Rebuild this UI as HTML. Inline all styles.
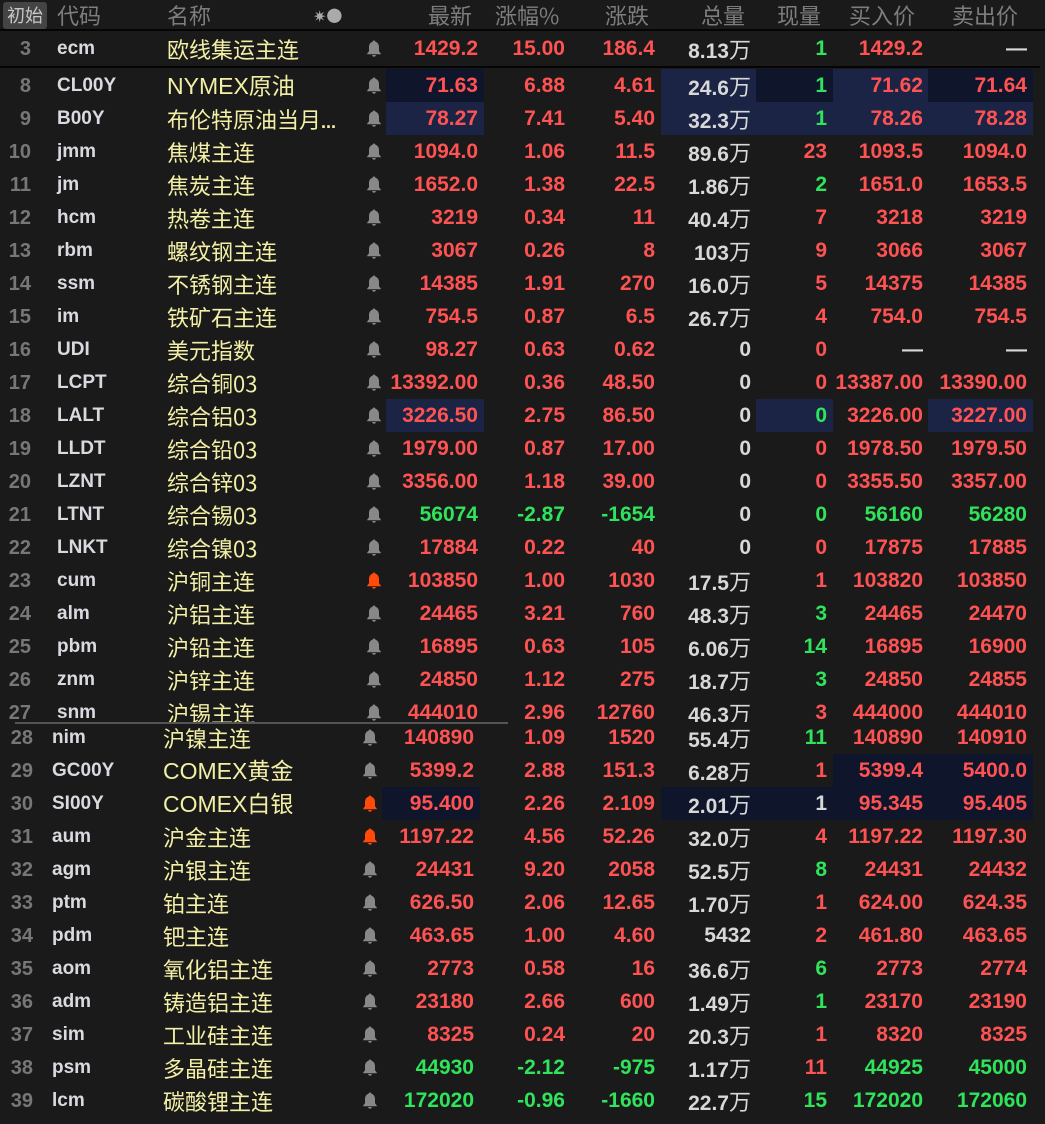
<!DOCTYPE html>
<html><head><meta charset="utf-8">
<style>
*{margin:0;padding:0;box-sizing:border-box}
body{width:1045px;height:1124px;background:#1a1a1a;overflow:hidden;position:relative;font-family:"Liberation Sans","Noto Sans CJK SC",sans-serif}
.hd{position:absolute;top:0;left:0;width:1045px;height:31px;background:#1a1a1a;border-bottom:2px solid #050505;color:#7d7d7d;font-size:22px;font-family:"Noto Sans CJK SC",sans-serif;line-height:30px}
.hd span{position:absolute;top:0}
.init{position:absolute;left:3px;top:2px;width:44px;height:27px;background:#444;border-radius:3px;color:#c8c8c8;font-size:18px;line-height:27px;text-align:center}
.r{position:absolute;left:0;width:1045px;height:33px;line-height:34px;font-weight:bold;font-size:21px}
.r>span{position:absolute;top:0;height:33px;white-space:nowrap}
.n{left:0;width:31px;text-align:right;color:#777;font-size:20px}
.c{left:57px;color:#d9d9e0;font-size:19px}
.m{left:167px;color:#f3f0a6;font-weight:normal;font-size:22px;font-family:"Noto Sans CJK SC",sans-serif}
.m.lat{font-family:"Liberation Sans","Noto Sans CJK SC",sans-serif;font-size:23px}
.b{left:367px;width:14px}
.b svg{position:absolute;top:8px;left:0}
.p1{left:386px;width:98px;text-align:right;padding-right:6px}
.p2{left:484px;width:87px;text-align:right;padding-right:6px}
.p3{left:571px;width:90px;text-align:right;padding-right:6px}
.v{left:661px;width:95px;text-align:right;padding-right:5px;color:#d8d8d8}
.v i{font-style:normal;font-weight:normal;font-size:22px;font-family:"Noto Sans CJK SC",sans-serif}
.x{left:756px;width:77px;text-align:right;padding-right:6px}
.bd{left:833px;width:95px;text-align:right;padding-right:5px}
.as{left:928px;width:105px;text-align:right;padding-right:6px}
.B .n{left:0;width:33px}.B .c{left:52px}.B .m{left:163px}.B .b{left:363px}
.B .p1{left:382px}
.R{color:#ff5252}.G{color:#2fe35a}.W{color:#d8d8d8}
.h1{background:#1b2444}.h2{background:#0f152b}
.wrapA{position:absolute;left:0;top:68px;width:1045px;height:654px;overflow:hidden}
.wrapB{position:absolute;left:0;top:722px;width:1045px;height:402px;overflow:hidden}
.sep{position:absolute;top:66px;left:0;width:1040px;height:2px;background:#050505}
.div{position:absolute;top:722px;left:15px;width:493px;height:2px;background:#555}
</style></head><body>
<svg width="0" height="0" style="position:absolute"><defs><symbol id="bell" viewBox="0 0 14 17"><path d="M7 0.5c0.9 0 1.4 0.6 1.4 1.3C10.7 2.4 12 4.4 12 7v4.2l1.8 2.3v0.8H0.2v-0.8L2 11.2V7c0-2.6 1.3-4.6 3.6-5.2C5.6 1.1 6.1 0.5 7 0.5zM5.2 15h3.6c0 1-0.8 1.8-1.8 1.8S5.2 16 5.2 15z"/></symbol></defs></svg>
<div class="hd">
<div class="init">初始</div>
<span style="left:57px">代码</span>
<span style="left:167px">名称</span>
<span style="left:313px;font-size:16px;color:#aaa">✷●</span>
<span style="left:428px">最新</span>
<span style="left:495px">涨幅%</span>
<span style="left:605px">涨跌</span>
<span style="left:701px">总量</span>
<span style="left:777px">现量</span>
<span style="left:849px">买入价</span>
<span style="left:952px">卖出价</span>
</div>
<div class="r" style="top:32px"><span class="n">3</span><span class="c">ecm</span><span class="m">欧线集运主连</span><span class="b" style="fill:#888"><svg width="14" height="17"><use href="#bell"/></svg></span><span class="p1 R">1429.2</span><span class="p2 R">15.00</span><span class="p3 R">186.4</span><span class="v">8.13<i>万</i></span><span class="x G">1</span><span class="bd R">1429.2</span><span class="as W">—</span></div>
<div class="sep"></div>
<div class="wrapA">
<div class="r" style="top:1px"><span class="n">8</span><span class="c">CL00Y</span><span class="m lat">NYMEX原油</span><span class="b" style="fill:#888"><svg width="14" height="17"><use href="#bell"/></svg></span><span class="p1 R h2">71.63</span><span class="p2 R">6.88</span><span class="p3 R">4.61</span><span class="v h1">24.6<i>万</i></span><span class="x G h2">1</span><span class="bd R h1">71.62</span><span class="as R h2">71.64</span></div>
<div class="r" style="top:34px"><span class="n">9</span><span class="c">B00Y</span><span class="m">布伦特原油当月<span style="font-family:'Liberation Sans';font-weight:bold;font-size:18px">...</span></span><span class="b" style="fill:#888"><svg width="14" height="17"><use href="#bell"/></svg></span><span class="p1 R h1">78.27</span><span class="p2 R">7.41</span><span class="p3 R">5.40</span><span class="v h1">32.3<i>万</i></span><span class="x G h1">1</span><span class="bd R h1">78.26</span><span class="as R h1">78.28</span></div>
<div class="r" style="top:67px"><span class="n">10</span><span class="c">jmm</span><span class="m">焦煤主连</span><span class="b" style="fill:#888"><svg width="14" height="17"><use href="#bell"/></svg></span><span class="p1 R">1094.0</span><span class="p2 R">1.06</span><span class="p3 R">11.5</span><span class="v">89.6<i>万</i></span><span class="x R">23</span><span class="bd R">1093.5</span><span class="as R">1094.0</span></div>
<div class="r" style="top:100px"><span class="n">11</span><span class="c">jm</span><span class="m">焦炭主连</span><span class="b" style="fill:#888"><svg width="14" height="17"><use href="#bell"/></svg></span><span class="p1 R">1652.0</span><span class="p2 R">1.38</span><span class="p3 R">22.5</span><span class="v">1.86<i>万</i></span><span class="x G">2</span><span class="bd R">1651.0</span><span class="as R">1653.5</span></div>
<div class="r" style="top:133px"><span class="n">12</span><span class="c">hcm</span><span class="m">热卷主连</span><span class="b" style="fill:#888"><svg width="14" height="17"><use href="#bell"/></svg></span><span class="p1 R">3219</span><span class="p2 R">0.34</span><span class="p3 R">11</span><span class="v">40.4<i>万</i></span><span class="x R">7</span><span class="bd R">3218</span><span class="as R">3219</span></div>
<div class="r" style="top:166px"><span class="n">13</span><span class="c">rbm</span><span class="m">螺纹钢主连</span><span class="b" style="fill:#888"><svg width="14" height="17"><use href="#bell"/></svg></span><span class="p1 R">3067</span><span class="p2 R">0.26</span><span class="p3 R">8</span><span class="v">103<i>万</i></span><span class="x R">9</span><span class="bd R">3066</span><span class="as R">3067</span></div>
<div class="r" style="top:199px"><span class="n">14</span><span class="c">ssm</span><span class="m">不锈钢主连</span><span class="b" style="fill:#888"><svg width="14" height="17"><use href="#bell"/></svg></span><span class="p1 R">14385</span><span class="p2 R">1.91</span><span class="p3 R">270</span><span class="v">16.0<i>万</i></span><span class="x R">5</span><span class="bd R">14375</span><span class="as R">14385</span></div>
<div class="r" style="top:232px"><span class="n">15</span><span class="c">im</span><span class="m">铁矿石主连</span><span class="b" style="fill:#888"><svg width="14" height="17"><use href="#bell"/></svg></span><span class="p1 R">754.5</span><span class="p2 R">0.87</span><span class="p3 R">6.5</span><span class="v">26.7<i>万</i></span><span class="x R">4</span><span class="bd R">754.0</span><span class="as R">754.5</span></div>
<div class="r" style="top:265px"><span class="n">16</span><span class="c">UDI</span><span class="m">美元指数</span><span class="b" style="fill:#888"><svg width="14" height="17"><use href="#bell"/></svg></span><span class="p1 R">98.27</span><span class="p2 R">0.63</span><span class="p3 R">0.62</span><span class="v">0</span><span class="x R">0</span><span class="bd W">—</span><span class="as W">—</span></div>
<div class="r" style="top:298px"><span class="n">17</span><span class="c">LCPT</span><span class="m">综合铜03</span><span class="b" style="fill:#888"><svg width="14" height="17"><use href="#bell"/></svg></span><span class="p1 R">13392.00</span><span class="p2 R">0.36</span><span class="p3 R">48.50</span><span class="v">0</span><span class="x R">0</span><span class="bd R">13387.00</span><span class="as R">13390.00</span></div>
<div class="r" style="top:331px"><span class="n">18</span><span class="c">LALT</span><span class="m">综合铝03</span><span class="b" style="fill:#888"><svg width="14" height="17"><use href="#bell"/></svg></span><span class="p1 R h1">3226.50</span><span class="p2 R">2.75</span><span class="p3 R">86.50</span><span class="v">0</span><span class="x G h1">0</span><span class="bd R">3226.00</span><span class="as R h1">3227.00</span></div>
<div class="r" style="top:364px"><span class="n">19</span><span class="c">LLDT</span><span class="m">综合铅03</span><span class="b" style="fill:#888"><svg width="14" height="17"><use href="#bell"/></svg></span><span class="p1 R">1979.00</span><span class="p2 R">0.87</span><span class="p3 R">17.00</span><span class="v">0</span><span class="x R">0</span><span class="bd R">1978.50</span><span class="as R">1979.50</span></div>
<div class="r" style="top:397px"><span class="n">20</span><span class="c">LZNT</span><span class="m">综合锌03</span><span class="b" style="fill:#888"><svg width="14" height="17"><use href="#bell"/></svg></span><span class="p1 R">3356.00</span><span class="p2 R">1.18</span><span class="p3 R">39.00</span><span class="v">0</span><span class="x R">0</span><span class="bd R">3355.50</span><span class="as R">3357.00</span></div>
<div class="r" style="top:430px"><span class="n">21</span><span class="c">LTNT</span><span class="m">综合锡03</span><span class="b" style="fill:#888"><svg width="14" height="17"><use href="#bell"/></svg></span><span class="p1 G">56074</span><span class="p2 G">-2.87</span><span class="p3 G">-1654</span><span class="v">0</span><span class="x G">0</span><span class="bd G">56160</span><span class="as G">56280</span></div>
<div class="r" style="top:463px"><span class="n">22</span><span class="c">LNKT</span><span class="m">综合镍03</span><span class="b" style="fill:#888"><svg width="14" height="17"><use href="#bell"/></svg></span><span class="p1 R">17884</span><span class="p2 R">0.22</span><span class="p3 R">40</span><span class="v">0</span><span class="x R">0</span><span class="bd R">17875</span><span class="as R">17885</span></div>
<div class="r" style="top:496px"><span class="n">23</span><span class="c">cum</span><span class="m">沪铜主连</span><span class="b" style="fill:#ff4a0a"><svg width="14" height="17"><use href="#bell"/></svg></span><span class="p1 R">103850</span><span class="p2 R">1.00</span><span class="p3 R">1030</span><span class="v">17.5<i>万</i></span><span class="x R">1</span><span class="bd R">103820</span><span class="as R">103850</span></div>
<div class="r" style="top:529px"><span class="n">24</span><span class="c">alm</span><span class="m">沪铝主连</span><span class="b" style="fill:#888"><svg width="14" height="17"><use href="#bell"/></svg></span><span class="p1 R">24465</span><span class="p2 R">3.21</span><span class="p3 R">760</span><span class="v">48.3<i>万</i></span><span class="x G">3</span><span class="bd R">24465</span><span class="as R">24470</span></div>
<div class="r" style="top:562px"><span class="n">25</span><span class="c">pbm</span><span class="m">沪铅主连</span><span class="b" style="fill:#888"><svg width="14" height="17"><use href="#bell"/></svg></span><span class="p1 R">16895</span><span class="p2 R">0.63</span><span class="p3 R">105</span><span class="v">6.06<i>万</i></span><span class="x G">14</span><span class="bd R">16895</span><span class="as R">16900</span></div>
<div class="r" style="top:595px"><span class="n">26</span><span class="c">znm</span><span class="m">沪锌主连</span><span class="b" style="fill:#888"><svg width="14" height="17"><use href="#bell"/></svg></span><span class="p1 R">24850</span><span class="p2 R">1.12</span><span class="p3 R">275</span><span class="v">18.7<i>万</i></span><span class="x G">3</span><span class="bd R">24850</span><span class="as R">24855</span></div>
<div class="r" style="top:628px"><span class="n">27</span><span class="c">snm</span><span class="m">沪锡主连</span><span class="b" style="fill:#888"><svg width="14" height="17"><use href="#bell"/></svg></span><span class="p1 R">444010</span><span class="p2 R">2.96</span><span class="p3 R">12760</span><span class="v">46.3<i>万</i></span><span class="x R">3</span><span class="bd R">444000</span><span class="as R">444010</span></div>
</div>
<div class="wrapB">
<div class="r B" style="top:-1px"><span class="n">28</span><span class="c">nim</span><span class="m">沪镍主连</span><span class="b" style="fill:#888"><svg width="14" height="17"><use href="#bell"/></svg></span><span class="p1 R">140890</span><span class="p2 R">1.09</span><span class="p3 R">1520</span><span class="v">55.4<i>万</i></span><span class="x G">11</span><span class="bd R">140890</span><span class="as R">140910</span></div>
<div class="r B" style="top:32px"><span class="n">29</span><span class="c">GC00Y</span><span class="m lat">COMEX黄金</span><span class="b" style="fill:#888"><svg width="14" height="17"><use href="#bell"/></svg></span><span class="p1 R">5399.2</span><span class="p2 R">2.88</span><span class="p3 R">151.3</span><span class="v">6.28<i>万</i></span><span class="x R">1</span><span class="bd R h2">5399.4</span><span class="as R h2">5400.0</span></div>
<div class="r B" style="top:65px"><span class="n">30</span><span class="c">SI00Y</span><span class="m lat">COMEX白银</span><span class="b" style="fill:#ff4a0a"><svg width="14" height="17"><use href="#bell"/></svg></span><span class="p1 R h2">95.400</span><span class="p2 R">2.26</span><span class="p3 R">2.109</span><span class="v h2">2.01<i>万</i></span><span class="x W h2">1</span><span class="bd R h2">95.345</span><span class="as R h2">95.405</span></div>
<div class="r B" style="top:98px"><span class="n">31</span><span class="c">aum</span><span class="m">沪金主连</span><span class="b" style="fill:#ff4a0a"><svg width="14" height="17"><use href="#bell"/></svg></span><span class="p1 R">1197.22</span><span class="p2 R">4.56</span><span class="p3 R">52.26</span><span class="v">32.0<i>万</i></span><span class="x R">4</span><span class="bd R">1197.22</span><span class="as R">1197.30</span></div>
<div class="r B" style="top:131px"><span class="n">32</span><span class="c">agm</span><span class="m">沪银主连</span><span class="b" style="fill:#888"><svg width="14" height="17"><use href="#bell"/></svg></span><span class="p1 R">24431</span><span class="p2 R">9.20</span><span class="p3 R">2058</span><span class="v">52.5<i>万</i></span><span class="x G">8</span><span class="bd R">24431</span><span class="as R">24432</span></div>
<div class="r B" style="top:164px"><span class="n">33</span><span class="c">ptm</span><span class="m">铂主连</span><span class="b" style="fill:#888"><svg width="14" height="17"><use href="#bell"/></svg></span><span class="p1 R">626.50</span><span class="p2 R">2.06</span><span class="p3 R">12.65</span><span class="v">1.70<i>万</i></span><span class="x R">1</span><span class="bd R">624.00</span><span class="as R">624.35</span></div>
<div class="r B" style="top:197px"><span class="n">34</span><span class="c">pdm</span><span class="m">钯主连</span><span class="b" style="fill:#888"><svg width="14" height="17"><use href="#bell"/></svg></span><span class="p1 R">463.65</span><span class="p2 R">1.00</span><span class="p3 R">4.60</span><span class="v">5432</span><span class="x R">2</span><span class="bd R">461.80</span><span class="as R">463.65</span></div>
<div class="r B" style="top:230px"><span class="n">35</span><span class="c">aom</span><span class="m">氧化铝主连</span><span class="b" style="fill:#888"><svg width="14" height="17"><use href="#bell"/></svg></span><span class="p1 R">2773</span><span class="p2 R">0.58</span><span class="p3 R">16</span><span class="v">36.6<i>万</i></span><span class="x G">6</span><span class="bd R">2773</span><span class="as R">2774</span></div>
<div class="r B" style="top:263px"><span class="n">36</span><span class="c">adm</span><span class="m">铸造铝主连</span><span class="b" style="fill:#888"><svg width="14" height="17"><use href="#bell"/></svg></span><span class="p1 R">23180</span><span class="p2 R">2.66</span><span class="p3 R">600</span><span class="v">1.49<i>万</i></span><span class="x G">1</span><span class="bd R">23170</span><span class="as R">23190</span></div>
<div class="r B" style="top:296px"><span class="n">37</span><span class="c">sim</span><span class="m">工业硅主连</span><span class="b" style="fill:#888"><svg width="14" height="17"><use href="#bell"/></svg></span><span class="p1 R">8325</span><span class="p2 R">0.24</span><span class="p3 R">20</span><span class="v">20.3<i>万</i></span><span class="x R">1</span><span class="bd R">8320</span><span class="as R">8325</span></div>
<div class="r B" style="top:329px"><span class="n">38</span><span class="c">psm</span><span class="m">多晶硅主连</span><span class="b" style="fill:#888"><svg width="14" height="17"><use href="#bell"/></svg></span><span class="p1 G">44930</span><span class="p2 G">-2.12</span><span class="p3 G">-975</span><span class="v">1.17<i>万</i></span><span class="x R">11</span><span class="bd G">44925</span><span class="as G">45000</span></div>
<div class="r B" style="top:362px"><span class="n">39</span><span class="c">lcm</span><span class="m">碳酸锂主连</span><span class="b" style="fill:#888"><svg width="14" height="17"><use href="#bell"/></svg></span><span class="p1 G">172020</span><span class="p2 G">-0.96</span><span class="p3 G">-1660</span><span class="v">22.7<i>万</i></span><span class="x G">15</span><span class="bd G">172020</span><span class="as G">172060</span></div>
</div>
<div class="div"></div>
</body></html>
